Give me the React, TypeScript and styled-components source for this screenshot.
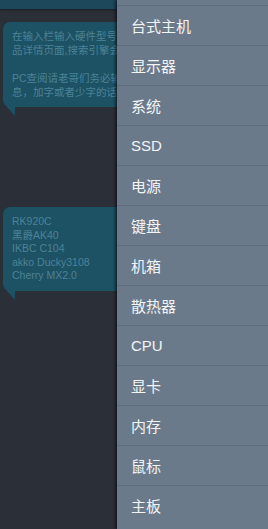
import React from 'react';
import styled, { createGlobalStyle } from 'styled-components';

const GlobalStyle = createGlobalStyle`
  html, body {
    margin: 0;
    padding: 0;
    background: #2b2f37;
  }
  body {
    font-family: "Noto Sans", "Noto Sans CJK SC", sans-serif;
  }
`;

const Screen = styled.div`
  position: relative;
  width: 268px;
  height: 529px;
  overflow: hidden;
  background: #2b2f37;
`;

const TopBar = styled.div`
  height: 9px;
  background: #1d475b;
  box-shadow: 0 1px 3px rgba(0, 0, 0, 0.4);
`;

// chat column, clipped where the drawer covers it
const Chat = styled.div`
  display: flex;
  flex-direction: column;
  width: 114px;
  overflow: hidden;
  padding: 13px 0 14px 3px;
`;

const Bubble = styled.div<{ top: number }>`
  position: relative;
  margin-top: ${({ top }) => top}px;
  width: 240px;
  padding: 8px 9px 8px 9px;
  background: #1d5164;
  border-radius: 7px;
  color: #4c8396;
  font-family: "Liberation Sans", "Noto Sans CJK SC", sans-serif;
  font-size: 10.5px;
  line-height: 13.5px;
  white-space: nowrap;

  &::after {
    content: '';
    position: absolute;
    left: 5px;
    bottom: -9px;
    border-left: 5px solid transparent;
    border-right: 4px solid transparent;
    border-top: 10px solid #1d5164;
    transform: skewX(20deg);
  }
`;

const Line = styled.div<{ gap?: boolean }>`
  margin-top: ${({ gap }) => (gap ? '15px' : '0')};
`;

const Drawer = styled.nav`
  position: absolute;
  top: 0;
  right: 0;
  bottom: 0;
  width: 151px;
  background: #6b7a8a;
  box-shadow: -2px 0 2px rgba(10, 12, 16, 0.6);
  padding-top: 5px;
`;

const Item = styled.div`
  height: 39px;
  display: flex;
  align-items: center;
  padding-left: 14px;
  border-top: 1px solid #5f6c7b;
  color: #f2f4f6;
  font-family: "Liberation Sans", "Noto Sans CJK SC", sans-serif;
  font-size: 15px;
`;

const menu = ['台式主机', '显示器', '系统', 'SSD', '电源', '键盘', '机箱', '散热器', 'CPU', '显卡', '内存', '鼠标', '主板'];

const App = () => {
  return (
    <>
      <GlobalStyle />
      <Screen>
        <TopBar />
        <Chat>
          <Bubble top={0}>
            <Line>在输入栏输入硬件型号即可进入商</Line>
            <Line>品详情页面,搜索引擎会自动匹配</Line>
            <Line gap>PC查阅请老哥们务必输入完整信</Line>
            <Line>息，加字或者少字的话都无法识别</Line>
          </Bubble>
          <Bubble top={100}>
            <Line>RK920C</Line>
            <Line>黑爵AK40</Line>
            <Line>IKBC C104</Line>
            <Line>akko Ducky3108</Line>
            <Line>Cherry MX2.0</Line>
          </Bubble>
        </Chat>
        <Drawer>
          {menu.map((m) => (
            <Item key={m}>{m}</Item>
          ))}
        </Drawer>
      </Screen>
    </>
  );
};

export default App;
